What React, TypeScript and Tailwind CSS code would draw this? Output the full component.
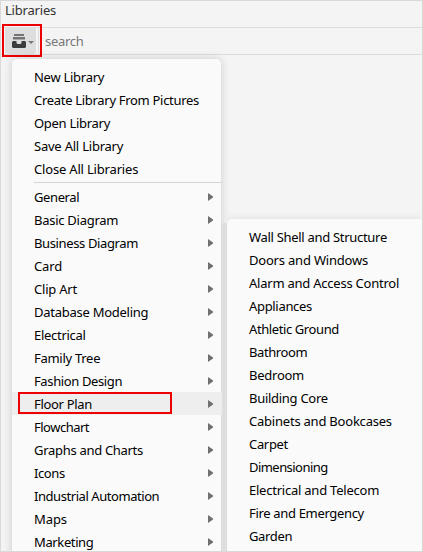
const actions: [string, number][] = [
  ['New Library', -0.27],
  ['Create Library From Pictures', -0.3],
  ['Open Library', -0.29],
  ['Save All Library', -0.22],
  ['Close All Libraries', -0.18],
];

const categories: [string, number][] = [
  ['General', -0.4],
  ['Basic Diagram', -0.27],
  ['Business Diagram', -0.37],
  ['Card', -0.1],
  ['Clip Art', -0.22],
  ['Database Modeling', -0.26],
  ['Electrical', -0.28],
  ['Family Tree', -0.28],
  ['Fashion Design', -0.38],
  ['Floor Plan', -0.32],
  ['Flowchart', -0.5],
  ['Graphs and Charts', -0.3],
  ['Icons', -0.4],
  ['Industrial Automation', -0.44],
  ['Maps', -0.1],
  ['Marketing', -0.38],
];

const floorPlans: [string, number][] = [
  ['Wall Shell and Structure', -0.3],
  ['Doors and Windows', -0.2],
  ['Alarm and Access Control', -0.23],
  ['Appliances', -0.32],
  ['Athletic Ground', -0.4],
  ['Bathroom', -0.4],
  ['Bedroom', -0.25],
  ['Building Core', -0.28],
  ['Cabinets and Bookcases', -0.22],
  ['Carpet', -0.32],
  ['Dimensioning', -0.55],
  ['Electrical and Telecom', -0.23],
  ['Fire and Emergency', -0.33],
  ['Garden', -0.36],
];

function Item({ label, tracking, arrow }: { label: string; tracking: number; arrow?: boolean }) {
  const active = label === 'Floor Plan';
  return (
    <li
      className={
        'relative flex h-[23px] items-center justify-between pl-[22px] ' +
        (active ? '-mr-px bg-[#eeeeee] pr-[9px]' : 'pr-2')
      }
    >
      <span className="whitespace-nowrap" style={{ letterSpacing: tracking + 'px' }}>
        {label}
      </span>
      {arrow && (
        <svg className="mt-px h-2 w-[5px] shrink-0" viewBox="0 0 5 8" fill="#707070">
          <path d="M0 0 L5 3.5 V4.5 L0 8 Z" />
        </svg>
      )}
      {active && <span className="absolute left-1.5 top-0 h-[22px] w-[154px] border-2 border-[#ee0000]" />}
    </li>
  );
}

export default function App() {
  return (
    <div className="relative h-[552px] w-[423px] overflow-hidden border border-[#d9d9d9] bg-[#f4f4f4] font-['Noto_Sans','Open_Sans',sans-serif] text-[13px] leading-[18px] text-black">
      <header className="flex h-[26px] items-start pl-1 text-[#333333]">
        <h1 className="tracking-[-0.2px]">Libraries</h1>
      </header>
      <div className="flex h-7 items-start border-y border-[#dddddd]">
        <button className="-mt-px ml-1 flex h-[27px] w-[31px] shrink-0 items-start rounded-[3px] bg-[#dedede] pl-[7px] pt-[7px]">
          <svg className="h-[14px] w-[14px] shrink-0" viewBox="0 0 14 14" fill="#3c3c3c">
            <path d="M2 0 H12 V2 H2 Z M1 3 H13 V5.5 H1 Z" fill="#747474" />
            <path d="M1 7 H4.5 V8.5 Q4.5 10 6 10 H8 Q9.5 10 9.5 8.5 V7 H13 L14 8 V13 L13 14 H1 L0 13 V8 Z" />
          </svg>
          <svg className="ml-0.5 mt-[7px] h-[3px] w-[6px] shrink-0" viewBox="0 0 6 3" fill="#777777">
            <path d="M0 0 H6 L3 3 Z" />
          </svg>
        </button>
        <span className="ml-0.5 h-[26px] w-[6px] rounded-l-[3px] border-l border-[#dddddd]" />
        <span className="pl-px pt-1 tracking-[-0.3px] text-[#777777]">search</span>
      </div>
      <span className="absolute left-px top-[23px] h-[33px] w-10 border-2 border-[#ee0000]" />

      <nav className="absolute left-[11px] top-[58px] h-[500px] w-[209px] rounded-t-[5px] bg-[#fafafa] pt-1.5 shadow-[0_0_10px_rgba(0,0,0,0.17)]">
        <span className="absolute left-[209px] top-[164px] h-[336px] w-2 rounded-t-[3px] bg-[#dedede]" />
        <ul>
          {actions.map(([label, tracking]) => (
            <Item key={label} label={label} tracking={tracking} />
          ))}
        </ul>
        <div className="my-0.5 ml-[22px] h-px bg-[#d4d4d4]" />
        <ul>
          {categories.map(([label, tracking]) => (
            <Item key={label} label={label} tracking={tracking} arrow />
          ))}
        </ul>
      </nav>

      <nav className="absolute left-[226px] top-[218px] h-[340px] w-[195px] rounded-tl-[5px] bg-[#fafafa] pt-1.5 shadow-[0_0_8px_rgba(0,0,0,0.1)] [clip-path:inset(-8px_0_0_0)]">
        <ul>
          {floorPlans.map(([label, tracking]) => (
            <Item key={label} label={label} tracking={tracking} />
          ))}
        </ul>
      </nav>
    </div>
  );
}
